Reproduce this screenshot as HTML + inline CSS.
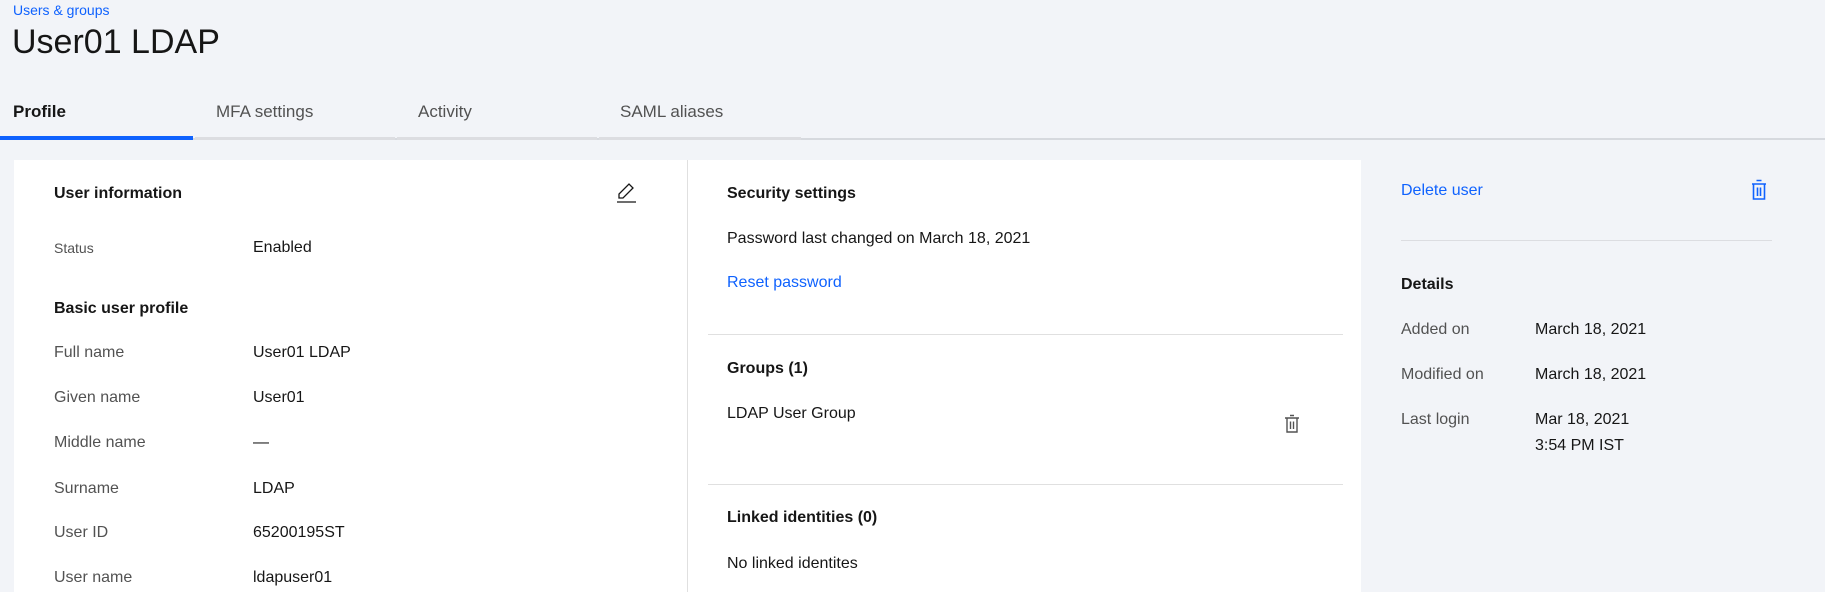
<!DOCTYPE html>
<html><head><style>
*{margin:0;padding:0;box-sizing:border-box}
body{width:1825px;height:592px;overflow:hidden;background:#f2f4f8;font-family:"Liberation Sans",sans-serif;color:#161616;position:relative}
.a{position:absolute;white-space:nowrap;line-height:1}
.lbl{color:#525252;font-size:16px}
.val{font-size:16px}
.h{font-weight:bold;font-size:16px}
.blue{color:#0f62fe}
</style></head><body>
<div class="a blue" style="left:13px;top:3px;font-size:14px">Users &amp; groups</div>
<div class="a" style="left:12px;top:25px;font-size:34px">User01 LDAP</div>

<div class="a" style="left:0;top:138px;width:1825px;height:2px;background:#d6d9de"></div>
<div class="a" style="left:0;top:136px;width:193px;height:4px;background:#0f62fe"></div>
<div class="a" style="left:195px;top:137px;width:200px;height:3px;background:#dcdde1"></div>
<div class="a" style="left:397px;top:137px;width:200px;height:3px;background:#dcdde1"></div>
<div class="a" style="left:599px;top:137px;width:202px;height:3px;background:#dcdde1"></div>
<div class="a" style="left:13px;top:103px;font-size:17px;font-weight:bold">Profile</div>
<div class="a" style="left:216px;top:103px;font-size:17px;color:#525252">MFA settings</div>
<div class="a" style="left:418px;top:103px;font-size:17px;color:#525252">Activity</div>
<div class="a" style="left:620px;top:103px;font-size:17px;color:#525252">SAML aliases</div>

<div class="a" style="left:14px;top:160px;width:673px;height:432px;background:#fff"></div>
<div class="a" style="left:688px;top:160px;width:673px;height:432px;background:#fff"></div>
<div class="a" style="left:687px;top:160px;width:1px;height:432px;background:#e0e0e0"></div>

<div class="a h" style="left:54px;top:186px">User information</div>
<svg class="a" style="left:615px;top:181px" width="22" height="24" viewBox="0 0 22 24"><path d="M4 17 L4 13 L14 3 L18 7 L8 17 Z" fill="none" stroke="#161616" stroke-width="1.3"/><path d="M2 21 H21" stroke="#161616" stroke-width="1.3"/></svg>
<div class="a lbl" style="left:54px;top:241px;font-size:14px">Status</div>
<div class="a val" style="left:253px;top:240px">Enabled</div>
<div class="a h" style="left:54px;top:301px">Basic user profile</div>
<div class="a lbl" style="left:54px;top:345px">Full name</div><div class="a val" style="left:253px;top:345px">User01 LDAP</div>
<div class="a lbl" style="left:54px;top:390px">Given name</div><div class="a val" style="left:253px;top:390px">User01</div>
<div class="a lbl" style="left:54px;top:435px">Middle name</div><div class="a val" style="left:253px;top:435px">—</div>
<div class="a lbl" style="left:54px;top:481px">Surname</div><div class="a val" style="left:253px;top:481px">LDAP</div>
<div class="a lbl" style="left:54px;top:525px">User ID</div><div class="a val" style="left:253px;top:525px">65200195ST</div>
<div class="a lbl" style="left:54px;top:570px">User name</div><div class="a val" style="left:253px;top:570px">ldapuser01</div>

<div class="a h" style="left:727px;top:186px">Security settings</div>
<div class="a val" style="left:727px;top:231px">Password last changed on March 18, 2021</div>
<div class="a val blue" style="left:727px;top:275px">Reset password</div>
<div class="a" style="left:708px;top:334px;width:635px;height:1px;background:#e0e0e0"></div>
<div class="a h" style="left:727px;top:361px">Groups (1)</div>
<div class="a val" style="left:727px;top:406px">LDAP User Group</div>
<svg class="a" style="left:1284px;top:414px" width="16" height="20" viewBox="0 0 16 20"><path d="M1 4 H15 M6 1.5 H10 M3 4 V18 H13 V4 M6.5 7.5 V15 M9.5 7.5 V15" fill="none" stroke="#525252" stroke-width="1.4"/></svg>
<div class="a" style="left:708px;top:484px;width:635px;height:1px;background:#e0e0e0"></div>
<div class="a h" style="left:727px;top:510px">Linked identities (0)</div>
<div class="a val" style="left:727px;top:556px">No linked identites</div>

<div class="a val blue" style="left:1401px;top:183px">Delete user</div>
<svg class="a" style="left:1751px;top:179px" width="16" height="22" viewBox="0 0 16 22"><path d="M1 5 H15 M5.5 1.5 H10.5 M2.5 5 V20 H13.5 V5 M6.5 8.5 V17 M9.5 8.5 V17" fill="none" stroke="#0f62fe" stroke-width="1.6"/></svg>
<div class="a" style="left:1401px;top:240px;width:371px;height:1px;background:#dcdde1"></div>
<div class="a h" style="left:1401px;top:277px">Details</div>
<div class="a lbl" style="left:1401px;top:322px">Added on</div><div class="a val" style="left:1535px;top:322px">March 18, 2021</div>
<div class="a lbl" style="left:1401px;top:367px">Modified on</div><div class="a val" style="left:1535px;top:367px">March 18, 2021</div>
<div class="a lbl" style="left:1401px;top:412px">Last login</div><div class="a val" style="left:1535px;top:412px">Mar 18, 2021</div>
<div class="a val" style="left:1535px;top:438px">3:54 PM IST</div>
</body></html>
